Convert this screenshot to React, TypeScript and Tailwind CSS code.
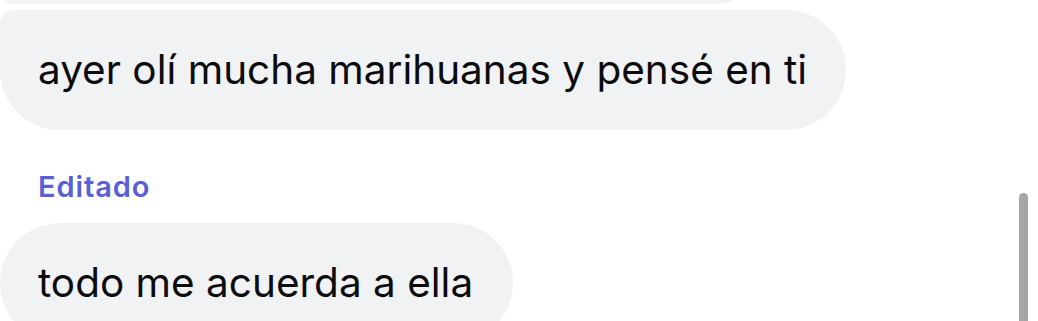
import React from "react";

export default function App() {
  return (
    <div
      className="relative w-[1038px] h-[321px] overflow-hidden bg-white"
      style={{ fontFamily: "Inter, 'Noto Sans', sans-serif" }}
    >
      <div className="flex flex-col items-start">
        <div className="-mt-[116px] h-[120px] w-[773px] rounded-tl-[60px] rounded-tr-[60px] rounded-br-[60px] rounded-bl-[14px] bg-[#f1f2f4]" />
        <div className="mt-[6px] h-[120px] flex items-center pl-[38px] pr-[39px] rounded-tl-[14px] rounded-tr-[60px] rounded-br-[60px] rounded-bl-[60px] bg-[#f1f2f4] text-[40.5px] leading-[48px] text-[#0c0c0e]">
          ayer olí mucha marihuanas y pensé en ti
        </div>
        <div className="mt-[39px] pl-[38px] text-[29px] leading-[35px] font-semibold tracking-[0.9px] text-[#5a5fd6]">
          Editado
        </div>
        <div className="mt-[19px] h-[120px] flex items-center pl-[38px] pr-[40px] rounded-[60px] bg-[#f1f2f4] text-[40.5px] leading-[48px] text-[#0c0c0e]">
          todo me acuerda a ella
        </div>
      </div>
      <div className="absolute left-[1019px] top-[193px] w-[9px] h-[160px] rounded-full bg-[#a6a6a6]" />
    </div>
  );
}
